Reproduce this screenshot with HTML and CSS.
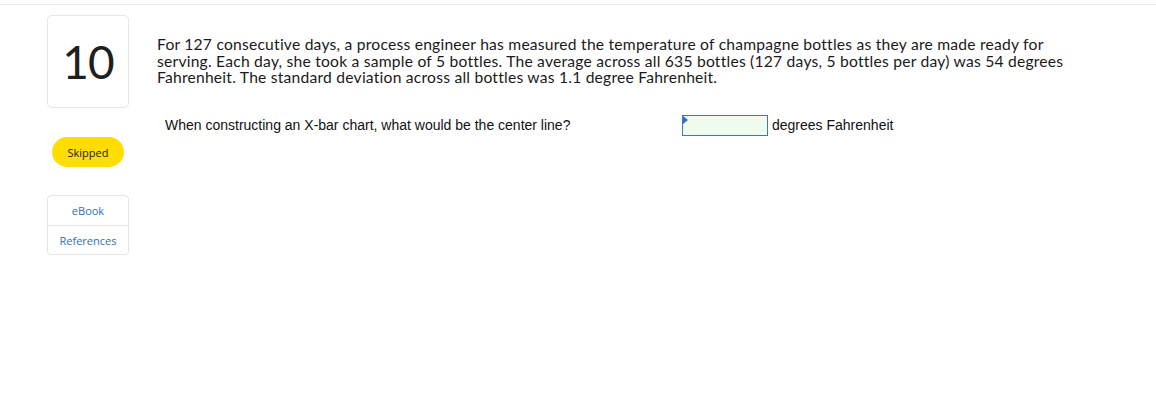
FILE: index.html
```html
<!DOCTYPE html>
<html>
<head>
<meta charset="utf-8">
<link rel="stylesheet" href="styles.css">
</head>
<body>
<div class="topbar"></div>
<div class="main">
  <div class="side">
    <div class="qnum">10</div>
    <div class="status">Skipped</div>
    <div class="links">
      <div class="link">eBook</div>
      <div class="link">References</div>
    </div>
  </div>
  <div class="content">
    <p class="prompt">For 127 consecutive days, a process engineer has measured the temperature of champagne bottles as they are made ready for serving. Each day, she took a sample of 5 bottles. The average across all 635 bottles (127 days, 5 bottles per day) was 54 degrees Fahrenheit. The standard deviation across all bottles was 1.1 degree Fahrenheit.</p>
    <div class="row">
      <span class="label">When constructing an X-bar chart, what would be the center line?</span>
      <span class="answer"><span class="flag"></span></span>
      <span class="unit">degrees Fahrenheit</span>
    </div>
  </div>
</div>
</body>
</html>
```

FILE: styles.css
```css
html, body {
  margin: 0;
  padding: 0;
  background: #fff;
}
body {
  font-family: Lato, "Open Sans", sans-serif;
  color: #222;
}
.topbar {
  height: 4px;
  border-bottom: 1px solid #ececec;
}
.main {
  display: flex;
  padding-top: 10px;
  padding-left: 47px;
}
.side {
  width: 82px;
  display: flex;
  flex-direction: column;
  align-items: center;
}
.qnum {
  box-sizing: border-box;
  width: 82px;
  height: 93px;
  border: 1px solid #e6e6e6;
  border-radius: 5px;
  display: flex;
  align-items: center;
  justify-content: center;
  font-size: 46px;
  color: #1f1f1f;
  letter-spacing: -1px;
}
.status {
  margin-top: 29px;
  width: 72px;
  height: 30px;
  border-radius: 15px;
  background: #ffdd00;
  font-family: "Open Sans", Lato, sans-serif;
  font-size: 11px;
  color: #1a1a1a;
  display: flex;
  align-items: center;
  justify-content: center;
}
.links {
  margin-top: 28px;
  box-sizing: border-box;
  width: 82px;
  border: 1px solid #e6e6e6;
  border-radius: 4px;
}
.link {
  height: 29px;
  display: flex;
  align-items: center;
  justify-content: center;
  font-family: "Open Sans", Lato, sans-serif;
  font-size: 11px;
  color: #2f6fbd;
}
.link + .link {
  height: 28px;
  border-top: 1px solid #e6e6e6;
}
.content {
  margin-left: 28px;
  width: 912px;
}
.prompt {
  margin: 21px 0 0 0;
  font-size: 15.65px;
  line-height: 16.5px;
  letter-spacing: 0.22px;
  color: #1a1a1a;
}
.row {
  display: flex;
  align-items: center;
  margin-top: 29px;
  padding-left: 8px;
  font-family: "Liberation Sans", Arial, sans-serif;
  font-size: 14px;
  color: #111;
}
.label {
  width: 517px;
}
.answer {
  position: relative;
  box-sizing: border-box;
  width: 86px;
  height: 21px;
  border: 1px solid #3a78c3;
  background: #effcef;
}
.flag {
  position: absolute;
  left: 0;
  top: 0;
  width: 0;
  height: 0;
  border-top: 4px solid transparent;
  border-bottom: 4px solid transparent;
  border-left: 5px solid #2f6fbd;
}
.unit {
  margin-left: 4px;
}
```
